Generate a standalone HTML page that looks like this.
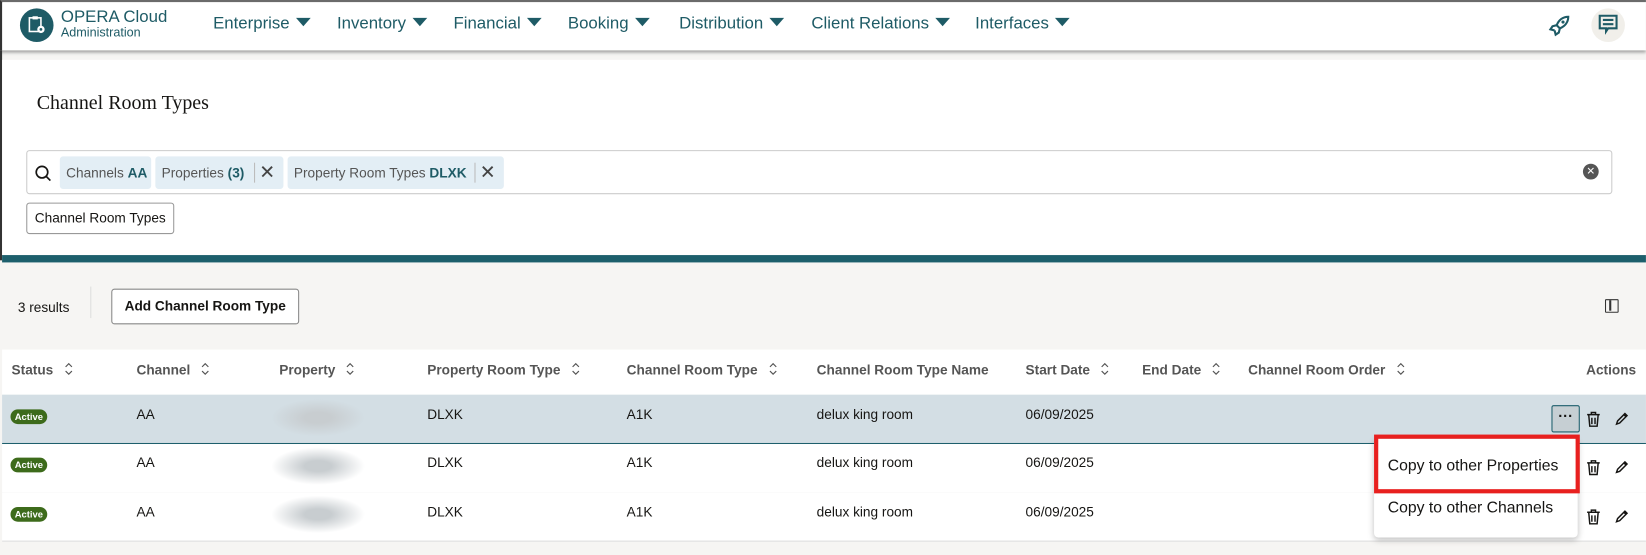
<!DOCTYPE html>
<html><head><style>
*{box-sizing:border-box;margin:0;padding:0}
body{width:1646px;height:555px;overflow:hidden;font-family:"Liberation Sans",sans-serif;background:#f6f5f3;position:relative;color:#161513;white-space:nowrap}
#w{position:absolute;left:0;top:0;width:1568px;height:529px;transform:scale(1.0497);transform-origin:0 0}
.abs{position:absolute}
.hdr{left:0;top:0;width:1568px;height:48px;background:#fff;border-top:2px solid #6b6b6b;border-left:2px solid #333;box-shadow:0 2px 3px rgba(0,0,0,.35)}
.nav{top:14px;font-size:16px;color:#1e5b66}
.tri{display:inline-block;width:0;height:0;border-left:7px solid transparent;border-right:7px solid transparent;border-top:8px solid #1e5b66;margin-left:6px;vertical-align:2px}
.panel{left:2px;top:57px;width:1566px;height:186px;background:#fff}
.chip{top:149px;height:31px;background:#e3eef5;border-radius:3px;font-size:13px;color:#555;padding:0 6px;line-height:31px}
.chip b{color:#1e5b66}
.th{top:345px;font-size:13px;color:#555;font-weight:bold}
.row{left:2px;width:1566px;height:47px;background:#fff;border-bottom:1px solid #ddd}
.td{font-size:13px;color:#161513}
.badge{background:#3d6b1b;color:#fff;font-size:9px;font-weight:bold;border-radius:8px;padding:2px 4px;left:10px}
.blur{left:258px;width:90px;height:36px;background:radial-gradient(ellipse,#c8cdd0 20%,rgba(255,255,255,0) 70%)}
.sort{display:inline-block;margin-left:10px;vertical-align:-1px}
</style></head><body>
<svg width="0" height="0" style="position:absolute"><defs>
<g id="tr"><path d="M1 3h12M5 3V1h4v2M2.5 3l1 11h7l1-11M5.5 6v6M8.5 6v6" fill="none" stroke="#161513" stroke-width="1.4"/></g>
<g id="pn"><path d="M2 12l1-3 7-7 2 2-7 7zM9 3l2 2" fill="none" stroke="#161513" stroke-width="1.4"/></g>
<g id="so"><path d="M1.5 4.5L4.5 1.5 7.5 4.5M1.5 8.5L4.5 11.5 7.5 8.5" fill="none" stroke="#555" stroke-width="1.1"/></g>
</defs></svg>
<div id="w">
<div class="abs hdr"></div>
<div class="abs" style="left:19px;top:8px;width:32px;height:32px;border-radius:50%;background:#1e5b66"></div>
<svg class="abs" style="left:27px;top:15px" width="17" height="18" viewBox="0 0 17 18"><rect x="1" y="2" width="11" height="13" fill="none" stroke="#fff" stroke-width="1.5"/><rect x="4" y="0.5" width="5" height="3" fill="#fff"/><circle cx="12" cy="13" r="3.5" fill="#fff"/><circle cx="12" cy="13" r="1.3" fill="#1e5b66"/></svg>
<div class="abs" style="left:58px;top:9px;font-size:16px;color:#1e5b66;line-height:16px">OPERA Cloud</div>
<div class="abs" style="left:58px;top:25px;font-size:12px;color:#1e5b66;line-height:12px">Administration</div>
<div class="abs nav" style="left:203px">Enterprise<span class="tri"></span></div>
<div class="abs nav" style="left:321px">Inventory<span class="tri"></span></div>
<div class="abs nav" style="left:432px">Financial<span class="tri"></span></div>
<div class="abs nav" style="left:541px">Booking<span class="tri"></span></div>
<div class="abs nav" style="left:647px">Distribution<span class="tri"></span></div>
<div class="abs nav" style="left:773px">Client Relations<span class="tri"></span></div>
<div class="abs nav" style="left:929px">Interfaces<span class="tri"></span></div>
<svg class="abs" style="left:1475px;top:13px" width="22" height="22" viewBox="0 0 22 22"><path d="M19 3c-5 0-9 3-11 8l3 3c5-2 8-6 8-11z" fill="none" stroke="#1e5b66" stroke-width="2"/><circle cx="14" cy="8" r="1.5" fill="#1e5b66"/><path d="M8 11l-4 1-2 3 4 1M11 14l-1 4-3 2-1-4" fill="none" stroke="#1e5b66" stroke-width="2"/></svg>
<div class="abs" style="left:1516px;top:8px;width:32px;height:32px;border-radius:50%;background:#f1efea"></div>
<svg class="abs" style="left:1522px;top:13px" width="20" height="20" viewBox="0 0 20 20"><path d="M2 2h16v12h-8l-2 3v-3H2z" fill="none" stroke="#1e5b66" stroke-width="2"/><path d="M5 6h10M5 10h10" stroke="#1e5b66" stroke-width="2"/></svg>
<div class="abs" style="left:0;top:48px;width:2px;height:200px;background:#333"></div>
<div class="abs panel"></div>
<div class="abs" style="left:35px;top:88px;font-size:19px;font-family:'Liberation Serif',serif;color:#161513">Channel Room Types</div>
<div class="abs" style="left:25px;top:143px;width:1511px;height:42px;border:1px solid #ccc;border-radius:3px;background:#fff"></div>
<svg class="abs" style="left:33px;top:157px" width="16" height="16" viewBox="0 0 16 16"><circle cx="7" cy="7" r="5.5" fill="none" stroke="#161513" stroke-width="1.6"/><path d="M11 11l4 4" stroke="#161513" stroke-width="1.6"/></svg>
<div class="abs chip" style="left:57px;width:87px">Channels <b>AA</b></div>
<div class="abs chip" style="left:148px;width:122px">Properties <b>(3)</b><span style="position:absolute;left:94px;top:6px;width:1px;height:19px;background:#bbb"></span><span style="position:absolute;left:99px;font-size:18px;color:#444">✕</span></div>
<div class="abs chip" style="left:274px;width:206px">Property Room Types <b>DLXK</b><span style="position:absolute;left:178px;top:6px;width:1px;height:19px;background:#bbb"></span><span style="position:absolute;left:183px;font-size:18px;color:#444">✕</span></div>
<div class="abs" style="left:1508px;top:156px;width:15px;height:15px;border-radius:50%;background:#555;color:#fff;font-size:10px;text-align:center;line-height:15px">✕</div>
<div class="abs" style="left:25px;top:193px;width:141px;height:30px;border:1px solid #999;border-radius:3px;background:#fff;font-size:13px;line-height:28px;text-align:center">Channel Room Types</div>
<div class="abs" style="left:2px;top:243px;width:1566px;height:7px;background:#1d5f6c"></div>
<div class="abs" style="left:17px;top:285px;font-size:13px">3 results</div>
<div class="abs" style="left:86px;top:273px;width:1px;height:30px;background:#ddd"></div>
<div class="abs" style="left:106px;top:275px;width:179px;height:34px;border:1px solid #888;border-radius:3px;background:#fff;font-size:13px;font-weight:bold;line-height:32px;text-align:center">Add Channel Room Type</div>
<div class="abs" style="left:1529px;top:285px;width:13px;height:13px;border:1.5px solid #333;border-radius:1px"><div style="position:absolute;left:3px;top:0;width:1.5px;height:10px;background:#333"></div></div>
<div class="abs" style="left:2px;top:333px;width:1566px;height:43px;background:#fff"></div>
<div class="abs th" style="left:11px">Status<svg class="sort" width="9" height="13"><use href="#so"/></svg></div>
<div class="abs th" style="left:130px">Channel<svg class="sort" width="9" height="13"><use href="#so"/></svg></div>
<div class="abs th" style="left:266px">Property<svg class="sort" width="9" height="13"><use href="#so"/></svg></div>
<div class="abs th" style="left:407px">Property Room Type<svg class="sort" width="9" height="13"><use href="#so"/></svg></div>
<div class="abs th" style="left:597px">Channel Room Type<svg class="sort" width="9" height="13"><use href="#so"/></svg></div>
<div class="abs th" style="left:778px">Channel Room Type Name</div>
<div class="abs th" style="left:977px">Start Date<svg class="sort" width="9" height="13"><use href="#so"/></svg></div>
<div class="abs th" style="left:1088px">End Date<svg class="sort" width="9" height="13"><use href="#so"/></svg></div>
<div class="abs th" style="left:1189px">Channel Room Order<svg class="sort" width="9" height="13"><use href="#so"/></svg></div>
<div class="abs th" style="left:1511px">Actions</div>
<div class="abs row" style="top:376px;background:#d3dee4;border-bottom:1px solid #1d5f6c"></div>
<div class="abs row" style="top:423px"></div>
<div class="abs row" style="top:469px"></div>
<div class="abs badge" style="top:390px">Active</div><div class="abs td" style="left:130px;top:387px">AA</div><div class="abs blur" style="top:380px"></div><div class="abs td" style="left:407px;top:387px">DLXK</div><div class="abs td" style="left:597px;top:387px">A1K</div><div class="abs td" style="left:778px;top:387px">delux king room</div><div class="abs td" style="left:977px;top:387px">06/09/2025</div>
<div class="abs badge" style="top:436px">Active</div><div class="abs td" style="left:130px;top:433px">AA</div><div class="abs blur" style="top:426px"></div><div class="abs td" style="left:407px;top:433px">DLXK</div><div class="abs td" style="left:597px;top:433px">A1K</div><div class="abs td" style="left:778px;top:433px">delux king room</div><div class="abs td" style="left:977px;top:433px">06/09/2025</div>
<div class="abs badge" style="top:483px">Active</div><div class="abs td" style="left:130px;top:480px">AA</div><div class="abs blur" style="top:472px"></div><div class="abs td" style="left:407px;top:480px">DLXK</div><div class="abs td" style="left:597px;top:480px">A1K</div><div class="abs td" style="left:778px;top:480px">delux king room</div><div class="abs td" style="left:977px;top:480px">06/09/2025</div>
<div class="abs" style="left:1478px;top:386px;width:27px;height:26px;border:1px solid #1d5f6c;border-radius:2px;background:#c6cfd3;text-align:center;font-size:14px;line-height:18px;font-weight:bold">···</div>
<svg class="abs" style="left:1511px;top:392px" width="14" height="15"><use href="#tr"/></svg>
<svg class="abs" style="left:1538px;top:392px" width="14" height="15"><use href="#pn"/></svg>
<svg class="abs" style="left:1511px;top:438px" width="14" height="15"><use href="#tr"/></svg>
<svg class="abs" style="left:1538px;top:438px" width="14" height="15"><use href="#pn"/></svg>
<svg class="abs" style="left:1511px;top:485px" width="14" height="15"><use href="#tr"/></svg>
<svg class="abs" style="left:1538px;top:485px" width="14" height="15"><use href="#pn"/></svg>
<div class="abs" style="left:1309px;top:418px;width:194px;height:94px;background:#fff;border-radius:4px;box-shadow:0 2px 6px rgba(0,0,0,.25)"></div>
<div class="abs" style="left:1309px;top:414px;width:196px;height:56px;border:4px solid #e8201f"></div>
<div class="abs" style="left:1322px;top:435px;font-size:15px">Copy to other Properties</div>
<div class="abs" style="left:1322px;top:475px;font-size:15px">Copy to other Channels</div>
</div>
</body></html>
